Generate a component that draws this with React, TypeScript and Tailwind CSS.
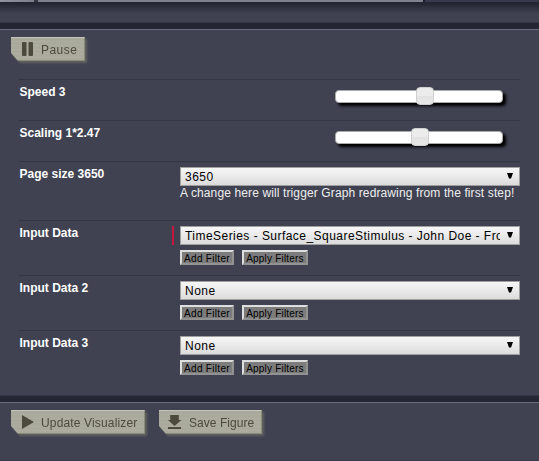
import type { ReactNode } from "react";

function Divider() {
  return <div className="h-2 shrink-0 border-t border-b border-t-[#333644] border-b-[#6c6c7e] bg-[#242733]" />;
}

function ActionButton({ width, label, tracking, children }: { width: string; label: string; tracking: string; children: ReactNode }) {
  return (
    <button className={`${width} h-6 shrink-0 drop-shadow-[2px_2px_1px_rgba(110,110,100,0.75)]`}>
      <span className="flex h-full items-center border-t border-r border-b border-t-[#c6c6b8] border-r-[#8b8b7d] border-b-[#8b8b7d] bg-[repeating-linear-gradient(180deg,#a9a99c_0px,#a9a99c_3px,#adada0_3px,#adada0_4px)] pl-[10px] [clip-path:polygon(0_0,100%_0,100%_100%,7px_100%,0_16px)]">
        <svg width="14" height="16" viewBox="0 0 14 16" fill="#4c4a3d" className="mr-[6px] shrink-0 overflow-visible">
          {children}
        </svg>
        <span className={`${tracking} whitespace-nowrap pt-px text-[12px] leading-4 text-[#4c4a3d]`}>{label}</span>
      </span>
    </button>
  );
}

function Row({ label, height, required, children }: { label: string; height: string; required?: boolean; children: ReactNode }) {
  return (
    <div className={`${height} flex border-t border-[#333644]`}>
      <div className="w-[153px] shrink-0 pt-[5px] pl-[0.5px] text-[12px] leading-[14px] font-bold whitespace-nowrap text-white">{label}</div>
      <div className={`mt-[5px] mr-[6px] h-[19px] w-[2px] shrink-0 ${required ? "bg-[#c4163f]" : ""}`} />
      <div className="min-w-0 flex-1 pt-[5px]">{children}</div>
    </div>
  );
}

function Slider({ offset }: { offset: string }) {
  return (
    <div className="relative mt-[5px] ml-[155px] h-[13px] w-[168px] rounded-[4px] border border-[#aaaaaa] bg-white shadow-[3px_3px_3px_#000]">
      <div className={`${offset} absolute -top-1 h-[18px] w-[18px] rounded-[4px] border border-[#d0d0d0] bg-[linear-gradient(#ececec_50%,#e2e2e2_50%,#e8e8e8)]`} />
    </div>
  );
}

function Select({ value }: { value: string }) {
  return (
    <div className="flex h-[19px] items-center border border-[#a0a0a0] bg-linear-to-b from-[#f7f7f7] to-[#dcdcdc] pl-1 text-black">
      <span className="w-[315px] overflow-hidden pt-px text-[12px] leading-4 tracking-[0.46px] whitespace-nowrap">{value}</span>
      <svg width="6" height="6" viewBox="0 0 6 6" className="mb-px ml-[7px]">
        <path d="M0 0H6L4 5.5H2Z" />
      </svg>
    </div>
  );
}

function FilterButton({ width, label, tracking }: { width: string; label: string; tracking: string }) {
  return (
    <button className={`${width} ${tracking} flex h-[15px] items-center justify-center border-2 border-t-[#dedede] border-r-[#929292] border-b-[#929292] border-l-[#dedede] bg-[#7c7c7c] pt-px text-[10px] leading-[11px] whitespace-nowrap text-black`}>
      {label}
    </button>
  );
}

function DataInput({ value }: { value: string }) {
  return (
    <>
      <Select value={value} />
      <div className="mt-[5px] flex gap-2">
        <FilterButton width="w-[54px]" label="Add Filter" tracking="tracking-[0.3px]" />
        <FilterButton width="w-[66px]" label="Apply Filters" tracking="tracking-[0.2px]" />
      </div>
    </>
  );
}

export default function App() {
  return (
    <div className="flex h-[461px] w-[539px] flex-col overflow-hidden bg-[#404252] font-['Liberation_Sans',Arial,sans-serif]">
      <div className="flex h-[2px] shrink-0">
        <div className="w-[34px] bg-linear-to-r from-[#9093a0] to-[#7c7f8c]" />
        <div className="w-1 bg-[#343740]" />
        <div className="w-[385px] bg-[#7d8190]" />
        <div className="w-[2px] bg-[#171a22]" />
        <div className="flex-1 bg-[#373a4d]" />
      </div>
      <div className="h-5 shrink-0 bg-linear-to-b from-[#20232e] to-[#404252] to-60%" />
      <Divider />
      <div className="h-[49px] shrink-0 pt-[7px] pl-[11px]">
        <ActionButton width="w-[74px]" label="Pause" tracking="tracking-[0.45px]">
          <rect x="1" y="1" width="4.5" height="14" rx="1" />
          <rect x="7.5" y="1" width="4.5" height="14" rx="1" />
        </ActionButton>
      </div>
      <div className="mr-[19px] ml-[19px] h-[316px] shrink-0">
        <Row label="Speed 3" height="h-[41px]">
          <Slider offset="left-[80px]" />
        </Row>
        <Row label="Scaling 1*2.47" height="h-[41px]">
          <Slider offset="left-[75px]" />
        </Row>
        <Row label="Page size 3650" height="h-[59px]">
          <Select value="3650" />
          <div className="text-[12px] leading-[14px] tracking-[0.12px] whitespace-nowrap text-[#eeeeee]">
            A change here will trigger Graph redrawing from the first step!
          </div>
        </Row>
        <Row label="Input Data" height="h-[55px]" required>
          <DataInput value="TimeSeries - Surface_SquareStimulus - John Doe - Fro" />
        </Row>
        <Row label="Input Data 2" height="h-[55px]">
          <DataInput value="None" />
        </Row>
        <Row label="Input Data 3" height="h-[55px]">
          <DataInput value="None" />
        </Row>
      </div>
      <Divider />
      <div className="flex flex-1 border-b border-[#363947] pt-[7px] pl-[11px]">
        <ActionButton width="w-[134px]" label="Update Visualizer" tracking="tracking-[0.15px]">
          <path d="M1 1L13 8L1 15Z" />
        </ActionButton>
        <div className="ml-[14px]">
          <ActionButton width="w-[103px]" label="Save Figure" tracking="tracking-[0.05px]">
            <path d="M1.2 1h8.6v5h2.7L5.5 12L-1 6h2.2zM-1 13h13v2H-1z" />
          </ActionButton>
        </div>
      </div>
    </div>
  );
}
